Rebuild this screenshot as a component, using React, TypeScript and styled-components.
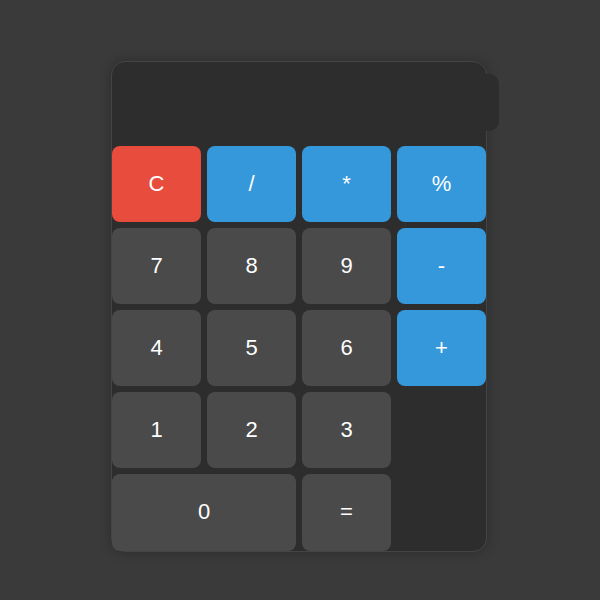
import styled, { createGlobalStyle } from "styled-components";

const GlobalStyle = createGlobalStyle`
  html, body {
    margin: 0;
    padding: 0;
    background: #3a3a3a;
    font-family: "Liberation Sans", Arial, sans-serif;
  }
`;

export const Page = styled.div`
  min-height: 600px;
  display: flex;
  justify-content: center;
  align-items: flex-start;
  padding-top: 61px;
  box-sizing: border-box;
`;

export const Calculator = styled.div`
  width: 376px;
  box-sizing: border-box;
  background: #2d2d2d;
  border: 1px solid #444444;
  border-radius: 14px;
  box-shadow: 0 0 12px rgba(0, 0, 0, 0.25);
  margin-right: 2px;
`;

export const Display = styled.div`
  width: calc(100% + 13px);
  height: 57px;
  margin: 12px 0 15px;
  background: #2d2d2d;
  border-radius: 10px;
  color: #ffffff;
  font-size: 36px;
  text-align: right;
`;

export const Keys = styled.div`
  display: grid;
  grid-template-columns: repeat(4, 89px);
  grid-template-rows: repeat(4, 76px) 76.5px;
  gap: 6px;
`;

type Kind = "num" | "op" | "clear";

const colors: Record<Kind, string> = {
  num: "#4a4a4a",
  op: "#3498db",
  clear: "#e74c3c",
};

export const Key = styled.button<{ $kind: Kind; $span?: number }>`
  grid-column: span ${({ $span }) => $span ?? 1};
  border: none;
  border-radius: 8px;
  background: ${({ $kind }) => colors[$kind]};
  color: #ffffff;
  font-family: "Liberation Sans", Arial, sans-serif;
  font-size: 22px;
  padding: 0;
  cursor: pointer;
`;

const keys: { label: string; kind: Kind; span?: number }[] = [
  { label: "C", kind: "clear" },
  { label: "/", kind: "op" },
  { label: "*", kind: "op" },
  { label: "%", kind: "op" },
  { label: "7", kind: "num" },
  { label: "8", kind: "num" },
  { label: "9", kind: "num" },
  { label: "-", kind: "op" },
  { label: "4", kind: "num" },
  { label: "5", kind: "num" },
  { label: "6", kind: "num" },
  { label: "+", kind: "op" },
  { label: "1", kind: "num" },
  { label: "2", kind: "num" },
  { label: "3", kind: "num" },
  { label: "0", kind: "num", span: 2 },
  { label: "=", kind: "num" },
];

export default function App() {
  return (
    <>
      <GlobalStyle />
      <Page>
        <Calculator>
          <Display />
          <Keys>
            {keys.map((k) => (
              <Key key={k.label} $kind={k.kind} $span={k.span}>
                {k.label}
              </Key>
            ))}
          </Keys>
        </Calculator>
      </Page>
    </>
  );
}
